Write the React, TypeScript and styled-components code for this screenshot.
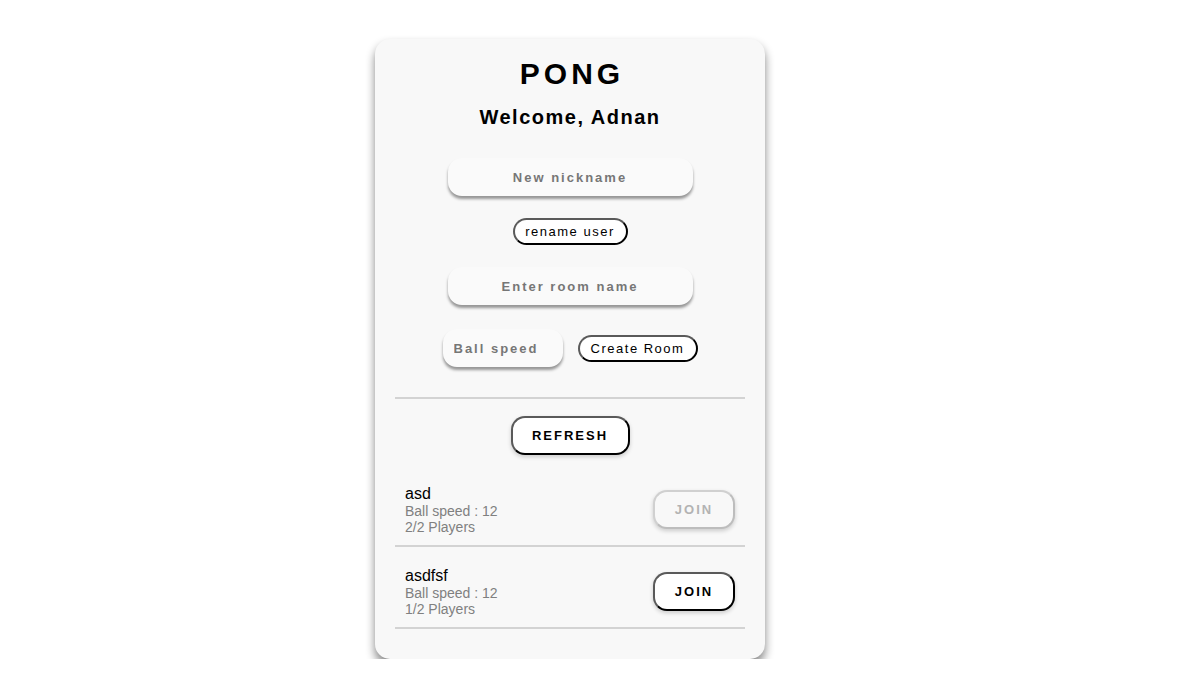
import React from "react";
import styled, { createGlobalStyle } from "styled-components";

const GlobalStyle = createGlobalStyle`
  body {
    margin: 0;
    background: #ffffff;
    font-family: "Liberation Sans", Arial, sans-serif;
  }
`;

const Page = styled.div`
  display: flex;
  justify-content: center;
  padding-top: 39px;
  padding-right: 43px;
`;

const Card = styled.div`
  width: 390px;
  box-sizing: border-box;
  padding: 18px 20px 30px;
  background: #f8f8f8;
  border-radius: 15px;
  box-shadow: 0 6px 10px rgba(0, 0, 0, 0.48);
  display: flex;
  flex-direction: column;
  align-items: center;
`;

const Title = styled.h1`
  margin: 0;
  font-size: 30px;
  line-height: 34px;
  font-weight: bold;
  letter-spacing: 4px;
  padding-left: 4px;
  color: #000;
`;

const Welcome = styled.h2`
  margin: 14px 0 0;
  font-size: 20px;
  line-height: 24px;
  font-weight: bold;
  letter-spacing: 1.5px;
  color: #000;
`;

const Input = styled.input<{ $w: number; $align?: string }>`
  width: ${(p) => p.$w}px;
  height: 38px;
  box-sizing: border-box;
  border: none;
  outline: none;
  border-radius: 14px;
  background: #fafafa;
  box-shadow: 0 3px 3px rgba(0, 0, 0, 0.4);
  padding: 0 11px;
  text-align: ${(p) => p.$align || "center"};
  font-family: "Liberation Sans", Arial, sans-serif;
  font-size: 13px;
  font-weight: bold;
  letter-spacing: 2px;
  color: #333;
  &::placeholder {
    color: #767676;
  }
`;

const Gap = styled.div<{ $h: number }>`
  height: ${(p) => p.$h}px;
  flex-shrink: 0;
`;

const SmallButton = styled.button<{ $w: number }>`
  width: ${(p) => p.$w}px;
  height: 27px;
  box-sizing: border-box;
  border: 2px solid;
  border-color: #5a5a5a #000 #000 #5a5a5a;
  border-radius: 14px;
  background: #fff;
  padding: 0;
  font-family: "Liberation Sans", Arial, sans-serif;
  font-size: 13px;
  letter-spacing: 1.5px;
  color: #000;
  cursor: pointer;
`;

const BigButton = styled.button<{ $w: number; disabled?: boolean }>`
  width: ${(p) => p.$w}px;
  height: 39px;
  box-sizing: border-box;
  border: 2px solid;
  border-color: ${(p) =>
    p.disabled ? "#d0d0d0 #bdbdbd #bdbdbd #d0d0d0" : "#5a5a5a #000 #000 #5a5a5a"};
  border-radius: 14px;
  background: ${(p) => (p.disabled ? "#f8f8f8" : "#fff")};
  box-shadow: 0 2px 4px rgba(0, 0, 0, 0.18);
  padding: 0;
  font-family: "Liberation Sans", Arial, sans-serif;
  font-size: 13px;
  font-weight: bold;
  letter-spacing: 2px;
  color: ${(p) => (p.disabled ? "#b3b3b3" : "#000")};
  cursor: ${(p) => (p.disabled ? "default" : "pointer")};
`;

const CreateRow = styled.div`
  display: flex;
  align-items: center;
  gap: 15px;
`;

const Divider = styled.div`
  align-self: stretch;
  height: 2px;
  background: #d3d3d3;
`;

const RoomList = styled.div`
  align-self: stretch;
  display: flex;
  flex-direction: column;
`;

const RoomRow = styled.div`
  display: flex;
  align-items: center;
  justify-content: space-between;
  padding: 19px 10px 10px;
  border-bottom: 2px solid #d3d3d3;
`;

const RoomInfo = styled.div`
  display: flex;
  flex-direction: column;
`;

const RoomName = styled.div`
  font-size: 16px;
  line-height: 19px;
  color: #000;
`;

const RoomMeta = styled.div`
  font-size: 14px;
  line-height: 16px;
  color: #808080;
`;

type Room = { name: string; speed: number; players: number; max: number };

const rooms: Room[] = [
  { name: "asd", speed: 12, players: 2, max: 2 },
  { name: "asdfsf", speed: 12, players: 1, max: 2 },
];

export default function App() {
  return (
    <>
      <GlobalStyle />
      <Page>
        <Card>
          <Title>PONG</Title>
          <Welcome>Welcome, Adnan</Welcome>
          <Gap $h={29} />
          <Input $w={245} placeholder="New nickname" />
          <Gap $h={22} />
          <SmallButton $w={115}>rename user</SmallButton>
          <Gap $h={22} />
          <Input $w={245} placeholder="Enter room name" />
          <Gap $h={24} />
          <CreateRow>
            <Input $w={120} $align="left" placeholder="Ball speed" />
            <SmallButton $w={120}>Create Room</SmallButton>
          </CreateRow>
          <Gap $h={30} />
          <Divider />
          <Gap $h={17} />
          <BigButton $w={119}>REFRESH</BigButton>
          <Gap $h={10} />
          <RoomList>
            {rooms.map((r) => (
              <RoomRow key={r.name}>
                <RoomInfo>
                  <RoomName>{r.name}</RoomName>
                  <RoomMeta>Ball speed : {r.speed}</RoomMeta>
                  <RoomMeta>
                    {r.players}/{r.max} Players
                  </RoomMeta>
                </RoomInfo>
                <BigButton $w={82} disabled={r.players >= r.max}>
                  JOIN
                </BigButton>
              </RoomRow>
            ))}
          </RoomList>
        </Card>
      </Page>
    </>
  );
}
